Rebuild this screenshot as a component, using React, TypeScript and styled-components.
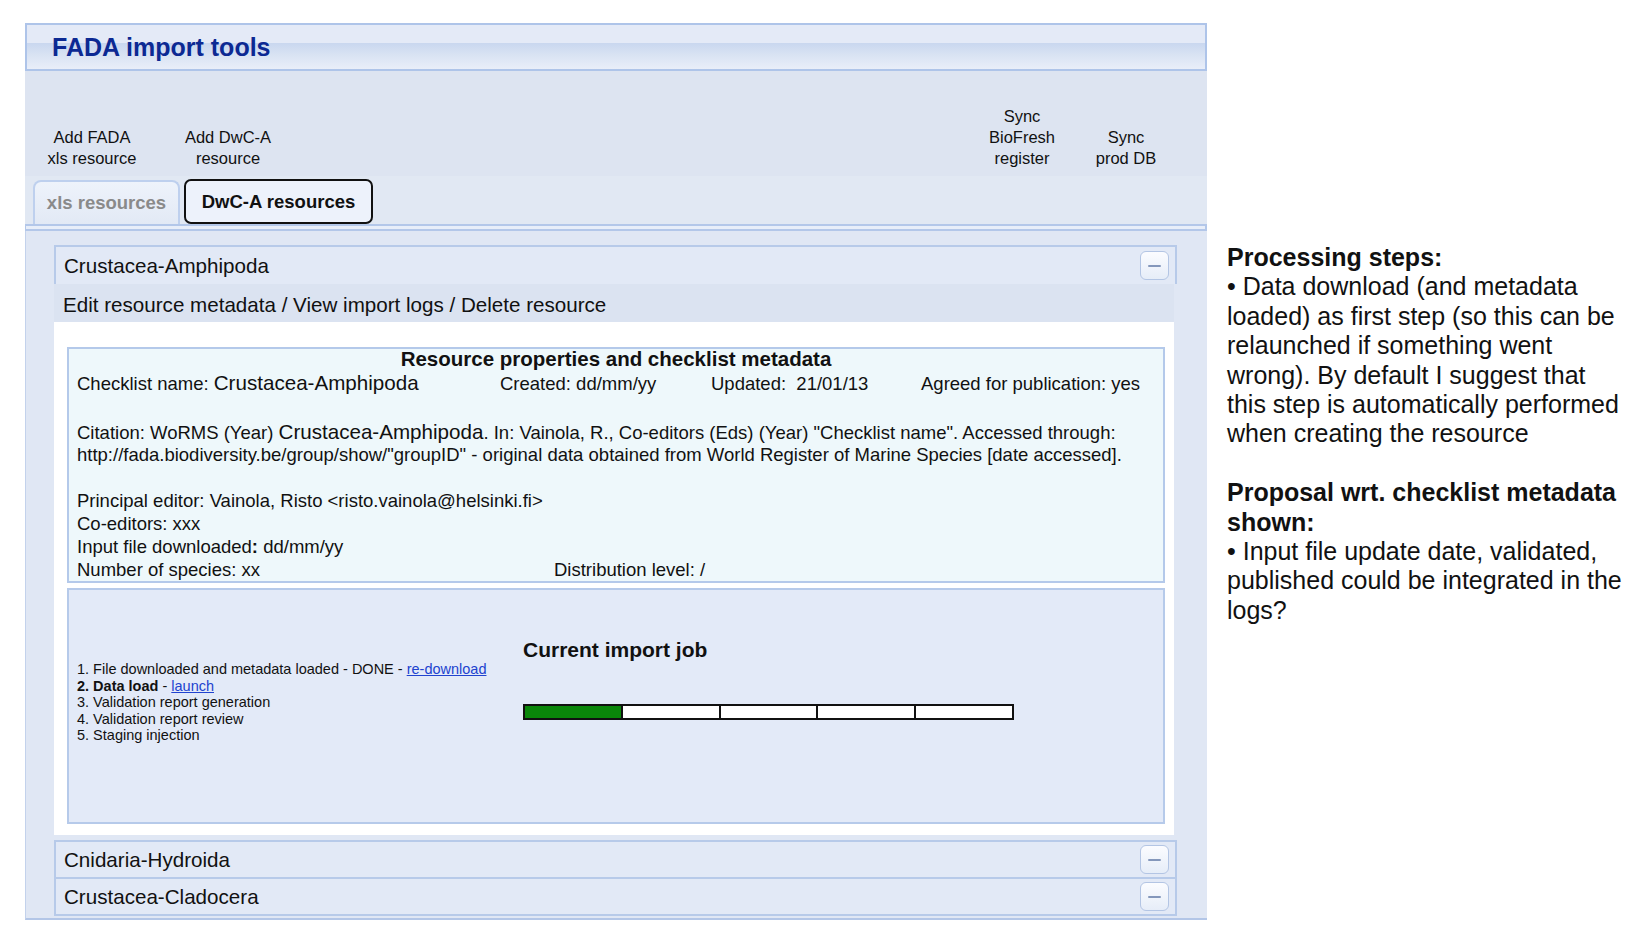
import React from "react";
import styled, { createGlobalStyle, css } from "styled-components";

const GlobalStyle = createGlobalStyle`
  html, body { margin: 0; padding: 0; background: #ffffff; }
  body {
    font-family: "Liberation Sans", Arial, Helvetica, sans-serif;
    color: #111111;
  }
`;

const Page = styled.div`
  display: flex;
  align-items: flex-start;
  width: 1647px;
  height: 945px;
  box-sizing: border-box;
  padding: 23px 0 0 25px;
  overflow: hidden;
`;

const MainPanel = styled.div`
  width: 1182px;
  flex: none;
  display: flex;
  flex-direction: column;
`;

const Header = styled.div`
  height: 48px;
  box-sizing: border-box;
  border: 2px solid #aec4e9;
  background: linear-gradient(
    to bottom,
    #e4eaf7 0px,
    #e4eaf7 18px,
    #c9d7ef 18px,
    #d9e3f3 30px,
    #e9eef9 44px
  );
  display: flex;
  align-items: center;
  padding-left: 25px;
`;

const Title = styled.h1`
  margin: 0;
  font-size: 25px;
  font-weight: bold;
  color: #0c2993;
  line-height: 1;
`;

const Toolbar = styled.div`
  height: 105px;
  box-sizing: border-box;
  background: #dde4f1;
  display: flex;
  justify-content: space-between;
  align-items: flex-end;
  padding: 0 36px 7px 17px;
`;

const ToolGroup = styled.div<{ $gap: number }>`
  display: flex;
  align-items: flex-end;
  gap: ${(p) => p.$gap}px;
`;

const ToolButton = styled.div<{ $w: number }>`
  width: ${(p) => p.$w}px;
  text-align: center;
  font-size: 16.5px;
  line-height: 21px;
  color: #111;
`;

const TabStrip = styled.div`
  height: 48px;
  box-sizing: border-box;
  background: #e1e8f3;
  display: flex;
  align-items: flex-end;
  gap: 4px;
  padding-left: 8px;
`;

const Tab = styled.div<{ $active?: boolean }>`
  display: flex;
  align-items: center;
  justify-content: center;
  box-sizing: border-box;
  font-weight: bold;
  font-size: 18.5px;
  ${(p) =>
    p.$active
      ? css`
          width: 189px;
          height: 45px;
          border: 2px solid #111;
          border-radius: 7px;
          background: #edf2fb;
          color: #111;
        `
      : css`
          width: 147px;
          height: 44px;
          border: 2px solid #bed0ee;
          border-bottom: none;
          border-radius: 8px 8px 0 0;
          background: linear-gradient(#eef3fb, #e2e9f5);
          color: #8a8a8a;
        `}
`;

const Separator = styled.div`
  height: 7px;
  box-sizing: border-box;
  border: 2px solid #b3c7e9;
  border-left-width: 1px;
  background: #e8eef9;
`;

const Content = styled.div`
  background: #e0e7f4;
  border-left: 1px solid #c3d2ec;
  border-bottom: 2px solid #b3c6e7;
  padding: 14px 30px 2px 28px;
  display: flex;
  flex-direction: column;
`;

const AccordionHeader = styled.div<{ $joined?: boolean; $open?: boolean }>`
  height: 39px;
  box-sizing: border-box;
  border: 2px solid #b7cae9;
  ${(p) => p.$open && css`border-bottom: none;`}
  ${(p) => p.$joined && css`margin-top: -2px;`}
  background: #e2e9f6;
  display: flex;
  align-items: center;
  justify-content: space-between;
  padding: 0 6px 0 8px;
  font-size: 20.6px;
  color: #111;
`;

const MinusButton = styled.div`
  width: 29px;
  height: 29px;
  box-sizing: border-box;
  border: 1.5px solid #b3c5e4;
  border-radius: 6px;
  background: linear-gradient(#fbfcff, #e6edf8);
  display: flex;
  align-items: center;
  justify-content: center;
  &::after {
    content: "";
    width: 13px;
    height: 2px;
    border-radius: 1px;
    background: #8497bb;
  }
`;

const ActionBar = styled.div`
  height: 38px;
  box-sizing: border-box;
  margin-right: 3px;
  background: #dbe3f1;
  display: flex;
  align-items: center;
  padding: 3px 0 0 9px;
  font-size: 20.6px;
  color: #111;
`;

const WhiteBody = styled.div`
  margin-right: 3px;
  background: #ffffff;
  padding: 25px 9px 11px 13px;
  display: flex;
  flex-direction: column;
  gap: 5px;
`;

const MetaBox = styled.div`
  border: 2px solid #b4c9ea;
  background: #eef8fb;
  padding: 0 8px;
  font-size: 18.5px;
  line-height: 23px;
  color: #111;
`;

const MetaHeading = styled.div`
  text-align: center;
  font-weight: bold;
  font-size: 20.5px;
  line-height: 20px;
`;

const MetaRow = styled.div<{ $h?: number }>`
  display: flex;
  height: ${(p) => p.$h ?? 28}px;
  align-items: center;
  white-space: nowrap;
`;

const MetaCell = styled.div<{ $w?: number }>`
  ${(p) => (p.$w ? `width: ${p.$w}px; flex: none;` : "flex: 1;")}
`;

const Big = styled.span`
  font-size: 20.6px;
`;

const Line = styled.div`
  white-space: nowrap;
  height: 23px;
`;

const Blank = styled.div`
  height: 23px;
`;

const ImportBox = styled.div`
  height: 236px;
  box-sizing: border-box;
  border: 2px solid #b6caea;
  background: #e3eaf8;
  display: flex;
  align-items: flex-start;
  padding-left: 8px;
`;

const StepList = styled.ol`
  list-style: none;
  margin: 71px 0 0 0;
  padding: 0;
  width: 446px;
  flex: none;
  font-size: 14.5px;
  line-height: 16.5px;
  color: #111;
`;

const Step = styled.li`
  white-space: nowrap;
  b {
    font-weight: bold;
  }
`;

const Link = styled.a`
  color: #2143cf;
  text-decoration: underline;
  cursor: pointer;
`;

const JobColumn = styled.div`
  display: flex;
  flex-direction: column;
  padding-top: 48px;
`;

const JobTitle = styled.div`
  font-weight: bold;
  font-size: 21px;
  line-height: 24px;
`;

const Progress = styled.div`
  margin-top: 42px;
  width: 491px;
  height: 16px;
  box-sizing: border-box;
  border: 2px solid #111;
  display: flex;
  background: #fff;
`;

const Segment = styled.div<{ $done?: boolean }>`
  flex: 1;
  background: ${(p) => (p.$done ? "#0a870a" : "#ffffff")};
  & + & {
    border-left: 2px solid #111;
  }
`;

const Notes = styled.div`
  margin: 220px 0 0 20px;
  font-size: 25px;
  line-height: 29.4px;
  color: #111;
`;

const NoteHead = styled.div`
  font-weight: bold;
  white-space: nowrap;
`;

const NoteLine = styled.div`
  white-space: nowrap;
`;

const NoteGap = styled.div`
  height: 29.4px;
`;

export default function App() {
  return (
    <>
      <GlobalStyle />
      <Page>
        <MainPanel>
          <Header>
            <Title>FADA import tools</Title>
          </Header>
          <Toolbar>
            <ToolGroup $gap={36}>
              <ToolButton $w={100}>
                Add FADA
                <br />
                xls resource
              </ToolButton>
              <ToolButton $w={100}>
                Add DwC-A
                <br />
                resource
              </ToolButton>
            </ToolGroup>
            <ToolGroup $gap={14}>
              <ToolButton $w={90}>
                Sync
                <br />
                BioFresh
                <br />
                register
              </ToolButton>
              <ToolButton $w={90}>
                Sync
                <br />
                prod DB
              </ToolButton>
            </ToolGroup>
          </Toolbar>
          <TabStrip>
            <Tab>xls resources</Tab>
            <Tab $active>DwC-A resources</Tab>
          </TabStrip>
          <Separator />
          <Content>
            <AccordionHeader $open>
              <span>Crustacea-Amphipoda</span>
              <MinusButton />
            </AccordionHeader>
            <ActionBar>Edit resource metadata / View import logs / Delete resource</ActionBar>
            <WhiteBody>
              <MetaBox>
                <MetaHeading>Resource properties and checklist metadata</MetaHeading>
                <MetaRow>
                  <MetaCell $w={423}>
                    Checklist name: <Big>Crustacea-Amphipoda</Big>
                  </MetaCell>
                  <MetaCell $w={211}>Created: dd/mm/yy</MetaCell>
                  <MetaCell $w={210}>Updated:&nbsp; 21/01/13</MetaCell>
                  <MetaCell>Agreed for publication: yes</MetaCell>
                </MetaRow>
                <Blank />
                <Line>
                  Citation: WoRMS (Year) <Big>Crustacea-Amphipoda</Big>. In: Vainola, R., Co-editors (Eds) (Year)
                  "Checklist name". Accessed through:
                </Line>
                <Line>
                  http://fada.biodiversity.be/group/show/"groupID" - original data obtained from World Register of
                  Marine Species [date accessed].
                </Line>
                <Blank />
                <Line>Principal editor: Vainola, Risto &lt;risto.vainola@helsinki.fi&gt;</Line>
                <Line>Co-editors: xxx</Line>
                <Line>
                  Input file downloaded<b>:</b> dd/mm/yy
                </Line>
                <MetaRow $h={23}>
                  <MetaCell $w={477}>Number of species: xx</MetaCell>
                  <MetaCell>Distribution level: /</MetaCell>
                </MetaRow>
              </MetaBox>
              <ImportBox>
                <StepList>
                  <Step>
                    1. File downloaded and metadata loaded - DONE - <Link>re-download</Link>
                  </Step>
                  <Step>
                    <b>2. Data load</b> - <Link>launch</Link>
                  </Step>
                  <Step>3. Validation report generation</Step>
                  <Step>4. Validation report review</Step>
                  <Step>5. Staging injection</Step>
                </StepList>
                <JobColumn>
                  <JobTitle>Current import job</JobTitle>
                  <Progress>
                    <Segment $done />
                    <Segment />
                    <Segment />
                    <Segment />
                    <Segment />
                  </Progress>
                </JobColumn>
              </ImportBox>
            </WhiteBody>
            <AccordionHeader style={{ marginTop: 5 }}>
              <span>Cnidaria-Hydroida</span>
              <MinusButton />
            </AccordionHeader>
            <AccordionHeader $joined>
              <span>Crustacea-Cladocera</span>
              <MinusButton />
            </AccordionHeader>
          </Content>
        </MainPanel>
        <Notes>
          <NoteHead>Processing steps:</NoteHead>
          <NoteLine>• Data download (and metadata</NoteLine>
          <NoteLine>loaded) as first step (so this can be</NoteLine>
          <NoteLine>relaunched if something went</NoteLine>
          <NoteLine>wrong). By default I suggest that</NoteLine>
          <NoteLine>this step is automatically performed</NoteLine>
          <NoteLine>when creating the resource</NoteLine>
          <NoteGap />
          <NoteHead>Proposal wrt. checklist metadata</NoteHead>
          <NoteHead>shown:</NoteHead>
          <NoteLine>• Input file update date, validated,</NoteLine>
          <NoteLine>published could be integrated in the</NoteLine>
          <NoteLine>logs?</NoteLine>
        </Notes>
      </Page>
    </>
  );
}
